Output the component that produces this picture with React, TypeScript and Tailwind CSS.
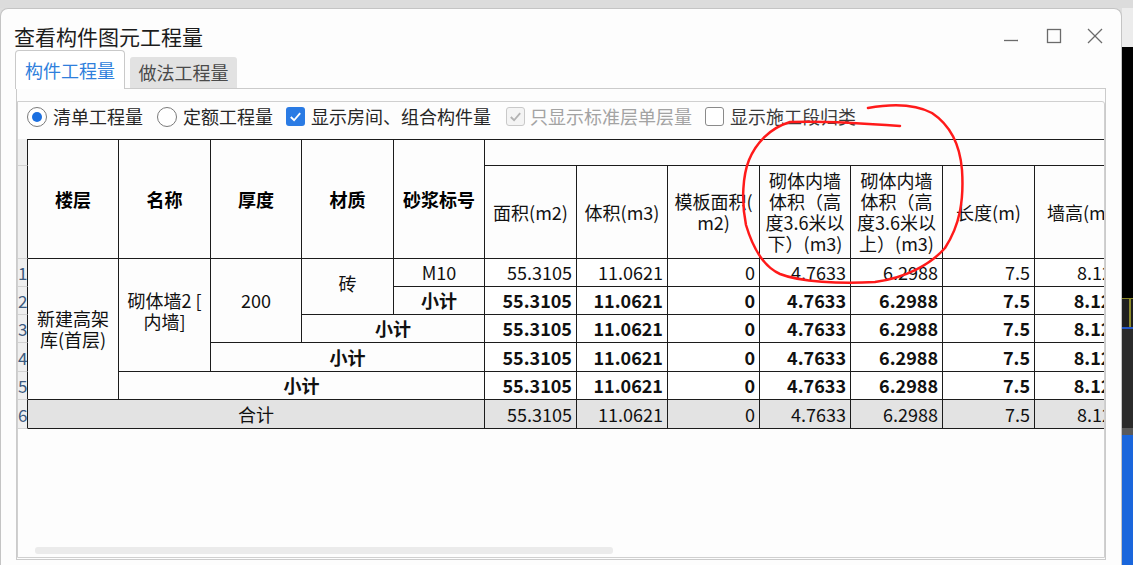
import React from "react";

const B = "border-r border-b border-[#1c1c1c]";
const HL = `${B} border-t border-t-[#1c1c1c] row-span-2 flex items-center justify-center font-bold text-[18px] text-black`;
const HN = `${B} flex items-center justify-center text-center text-[18px] leading-[21px] text-[#111]`;
const RN =
  "bg-[#efefef] border-r border-r-[#1c1c1c] border-b border-b-[#d2d2d2] text-[17px] leading-none text-[#3b5a7e] flex items-center overflow-hidden";
const C = `${B} flex items-center justify-center text-[18px] text-[#111]`;

const vals = ["55.3105", "11.0621", "0", "4.7633", "6.2988", "7.5", "8.125"];

function Nums({ bold, gray }: { bold?: boolean; gray?: boolean }) {
  return (
    <>
      {vals.map((v, i) => (
        <div
          key={i}
          className={`${B} flex items-center justify-end pr-[4px] text-[18px] text-[#111] whitespace-nowrap ${
            bold ? "font-bold" : "font-normal"
          } ${gray ? "bg-[#e3e3e3]" : "bg-white"}`}
        >
          {v}
        </div>
      ))}
    </>
  );
}

function Radio({ checked }: { checked?: boolean }) {
  return (
    <span className="w-[20px] h-[20px] rounded-full border border-[#7a7a7a] bg-white flex items-center justify-center shrink-0">
      {checked && <span className="w-[10px] h-[10px] rounded-full bg-[#1b6fe0]" />}
    </span>
  );
}

function Check({ kind }: { kind: "on" | "dis" | "off" }) {
  if (kind === "on")
    return (
      <span className="w-[19px] h-[19px] rounded-[3px] bg-[#2a7be4] flex items-center justify-center shrink-0">
        <svg viewBox="0 0 16 16" className="w-[15px] h-[15px]">
          <path d="M3 8.5 L6.5 12 L13 4.5" stroke="white" strokeWidth="2" fill="none" />
        </svg>
      </span>
    );
  if (kind === "dis")
    return (
      <span className="w-[19px] h-[19px] rounded-[3px] border border-[#c9c9c9] bg-[#f4f4f4] flex items-center justify-center shrink-0">
        <svg viewBox="0 0 16 16" className="w-[15px] h-[15px]">
          <path d="M3 8.5 L6.5 12 L13 4.5" stroke="#b3b3b3" strokeWidth="2" fill="none" />
        </svg>
      </span>
    );
  return <span className="block w-[19px] h-[19px] rounded-[3px] border border-[#8a8a8a] bg-white shrink-0" />;
}

function Window() {
  return (
    <div className="w-[1122px] h-[557px] shrink-0 bg-[#fdfdfd] rounded-t-[8px] border border-b-0 border-[#c4c4c4] flex flex-col">
      {/* title bar */}
      <div className="h-[41px] shrink-0 flex justify-between">
        <div className="self-end pl-[13px] text-[21px] leading-[28px] text-[#1c1c1c]">查看构件图元工程量</div>
        <div className="self-end mb-[6px] pr-[18px] flex">
          <svg width="16" height="16" viewBox="0 0 16 16">
            <line x1="1" y1="12.5" x2="15" y2="12.5" stroke="#6b6b6b" strokeWidth="1.3" />
          </svg>
          <svg width="16" height="16" viewBox="0 0 16 16" className="ml-[27px]">
            <rect x="1.5" y="1.5" width="13" height="13" stroke="#6b6b6b" strokeWidth="1.3" fill="none" />
          </svg>
          <svg width="16" height="16" viewBox="0 0 16 16" className="ml-[25px]">
            <line x1="1" y1="1" x2="15" y2="15" stroke="#6b6b6b" strokeWidth="1.3" />
            <line x1="15" y1="1" x2="1" y2="15" stroke="#6b6b6b" strokeWidth="1.3" />
          </svg>
        </div>
      </div>
      {/* tabs */}
      <div className="h-[38px] shrink-0 flex items-end pl-[14px]">
        <div className="relative z-10 -mb-px w-[110px] h-[39px] bg-white border border-b-0 border-[#c9c9c9] rounded-t-[4px] flex items-center justify-center text-[18px] text-[#2f7fdc]">
          构件工程量
        </div>
        <div className="ml-[5px] w-[107px] h-[31px] bg-[#e2e2e2] rounded-t-[3px] flex items-center justify-center text-[18px] text-[#4a4a4a]">
          做法工程量
        </div>
      </div>
      {/* panel */}
      <div className="ml-[15px] mr-[15px] h-[472px] shrink-0 border border-[#cbcbcb] pt-[12px] pb-[1px] flex flex-col">
        <div className="flex-1 border border-[#d0d0d0] rounded-tr-[3px] flex flex-col overflow-hidden">
          {/* toolbar */}
          <div className="h-[29px] shrink-0 flex items-center pl-[9px] text-[18px] text-[#262626] whitespace-nowrap">
            <Radio checked />
            <span className="ml-[6px]">清单工程量</span>
            <span className="ml-[14px] flex">
              <Radio />
            </span>
            <span className="ml-[6px]">定额工程量</span>
            <span className="ml-[13px] flex">
              <Check kind="on" />
            </span>
            <span className="ml-[6px]">显示房间、组合构件量</span>
            <span className="ml-[15px] flex">
              <Check kind="dis" />
            </span>
            <span className="ml-[5px] text-[#a3a3a3]">只显示标准层单层量</span>
            <span className="ml-[13px] flex">
              <Check kind="off" />
            </span>
            <span className="ml-[6px] text-[#3a3a3a]">显示施工段归类</span>
          </div>
          {/* table */}
          <div className="mt-[8px] h-[290px] shrink-0 overflow-hidden">
            <div className="grid w-[1109px] grid-cols-[10px_91px_92px_91px_92px_91px_92px_91px_92px_91px_92px_92px_92px] grid-rows-[27px_93px_28px_28px_28px_29px_28px_29px]">
              {/* header row 1 */}
              <div className={RN} />
              <div className={HL}>楼层</div>
              <div className={HL}>名称</div>
              <div className={HL}>厚度</div>
              <div className={HL}>材质</div>
              <div className={HL}>砂浆标号</div>
              <div className={`${B} border-t border-t-[#1c1c1c] col-span-7`} />
              {/* header row 2 */}
              <div className={RN} />
              <div className={HN}>面积(m2)</div>
              <div className={HN}>体积(m3)</div>
              <div className={HN}>
                模板面积(
                <br />
                m2)
              </div>
              <div className={HN}>
                砌体内墙
                <br />
                体积（高
                <br />
                度3.6米以
                <br />
                下）(m3)
              </div>
              <div className={HN}>
                砌体内墙
                <br />
                体积（高
                <br />
                度3.6米以
                <br />
                上）(m3)
              </div>
              <div className={`${HN} whitespace-nowrap`}>长度(m)</div>
              <div className={`${HN} whitespace-nowrap justify-start pl-[12px]`}>墙高(m)</div>
              {/* data row 1 */}
              <div className={RN}>1</div>
              <div className={`${C} row-span-5 text-center leading-[21px]`}>
                新建高架
                <br />
                库(首层)
              </div>
              <div className={`${C} row-span-4 text-center leading-[21px] pb-[8px]`}>
                砌体墙2 [
                <br />
                内墙]
              </div>
              <div className={`${C} row-span-3 text-[16px]`}>200</div>
              <div className={`${C} row-span-2 pb-[6px]`}>砖</div>
              <div className={C}>M10</div>
              <Nums />
              {/* row 2 */}
              <div className={RN}>2</div>
              <div className={`${C} font-bold`}>小计</div>
              <Nums bold />
              {/* row 3 */}
              <div className={RN}>3</div>
              <div className={`${C} col-span-2 font-bold`}>小计</div>
              <Nums bold />
              {/* row 4 */}
              <div className={RN}>4</div>
              <div className={`${C} col-span-3 font-bold`}>小计</div>
              <Nums bold />
              {/* row 5 */}
              <div className={RN}>5</div>
              <div className={`${C} col-span-4 font-bold`}>小计</div>
              <Nums bold />
              {/* row 6 */}
              <div className={RN}>6</div>
              <div className={`${C} col-span-5 bg-[#e3e3e3]`}>合计</div>
              <Nums gray />
            </div>
          </div>
          <div className="flex-1" />
          <div className="h-[10px] shrink-0 pb-[3px]">
            <div className="ml-[17px] w-[578px] h-[7px] rounded-[3px] bg-[#ebebeb]" />
          </div>
        </div>
      </div>
    </div>
  );
}

function RightStrip() {
  return (
    <div className="flex-1 flex flex-col">
      <div className="h-[39px] bg-[#ececec]" />
      <div className="h-[251px] bg-black" />
      <div className="h-[1px] bg-[#8c8a2a]" />
      <div className="h-[28px] bg-[#1f1f1f] flex justify-end">
        <div className="w-[2px] mr-[2px] bg-[#8c8a2a]" />
      </div>
      <div className="h-[2px] bg-[#2558c9]" />
      <div className="h-[99px] bg-[#2b2b2b]" />
      <div className="h-[7px] bg-[#5a5a5a]" />
      <div className="flex-1 bg-[#1a66dc]" />
    </div>
  );
}

export default function App() {
  return (
    <div className="relative w-[1133px] h-[565px] bg-[#dedede] overflow-hidden flex flex-col font-['Noto_Sans_CJK_SC',sans-serif]">
      <div className="h-[8px] shrink-0 bg-[#dcdcdc]" />
      <div className="flex flex-1 min-h-0">
        <Window />
        <RightStrip />
      </div>
      <svg className="absolute inset-0 pointer-events-none" width="1133" height="565" viewBox="0 0 1133 565">
        <path
          d="M868 108 C 890 104, 915 104, 932 113 C 950 125, 960 145, 962 170 C 964 200, 960 225, 945 248 C 930 265, 905 278, 875 282 C 840 284, 800 282, 780 274 C 762 266, 752 245, 746 225 C 741 200, 743 175, 749 160 C 756 143, 770 128, 790 122 C 820 121, 860 123, 900 126"
          stroke="#ff1a1a"
          strokeWidth="2.5"
          fill="none"
          strokeLinecap="round"
        />
      </svg>
    </div>
  );
}
